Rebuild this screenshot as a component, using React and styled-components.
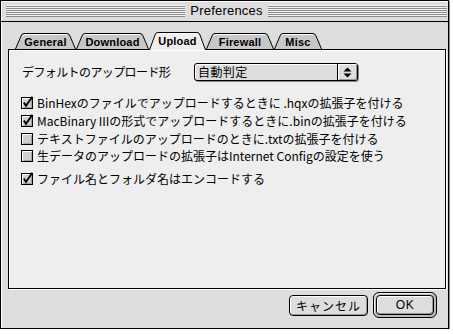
import React from 'react';
import styled, { createGlobalStyle } from 'styled-components';

const Global = createGlobalStyle`
  html, body { margin: 0; padding: 0; background: #ffffff; }
  body { font-family: "Noto Sans CJK JP", "Liberation Sans", sans-serif; color: #000; }
  * { box-sizing: border-box; }
`;

const Window = styled.div`
  width: 449px;
  height: 329px;
  border: 1px solid #000;
  background: #dddddd;
  display: flex;
  flex-direction: column;
  box-shadow: 1px 1px 0 #888;
`;

const TitleBar = styled.div`
  height: 21px;
  flex: none;
  display: flex;
  align-items: center;
  gap: 5px;
  padding: 0 1px 0 5px;
  border-bottom: 1px solid #000;
  background: #dddddd;
  box-shadow: inset 1px 1px 0 #fff;
`;

const Stripes = styled.div`
  flex: 1;
  height: 12px;
  background: repeating-linear-gradient(to bottom, #f4f4f4 0 1px, #8a8a8a 1px 2px);
`;

const Title = styled.div`
  font-family: "Liberation Sans", Arial, sans-serif;
  font-size: 13px;
  line-height: 14px;
  letter-spacing: 0.2px;
`;

const Body = styled.div`
  flex: 1;
  display: flex;
  flex-direction: column;
  padding: 10px 2px 0 7px;
  box-shadow: inset 1px 0 0 #fff;
`;

const TabRow = styled.div`
  display: flex;
  align-items: flex-end;
  height: 17px;
  padding-left: 7px;
  position: relative;
  z-index: 2;
`;

const TabShell = styled.div`
  position: relative;
  width: ${p => p.$w}px;
  height: ${p => (p.$active ? 18 : 16)}px;
  margin-bottom: ${p => (p.$active ? -1 : 0)}px;
  display: flex;
  align-items: center;
  justify-content: center;
  padding-top: 1px;
  font-family: "Liberation Sans", Arial, sans-serif;
  font-weight: bold;
  font-size: 11px;
  letter-spacing: 0.2px;
  color: #000;
`;

const TabShape = styled.svg`
  position: absolute;
  left: 0;
  top: 0;
  z-index: -1;
`;

const TabLabel = styled.span`
  position: relative;
  padding-bottom: ${p => (p.$active ? 2 : 0)}px;
`;

function Tab({ label, w, active }) {
  const h = active ? 18 : 16;
  const s = 6;
  const fill = active ? '#eeeeee' : '#c8c8c8';
  const d = `M0.5,${h} L${s},3 Q${s + 0.8},0.5 ${s + 3},0.5 L${w - s - 3},0.5 Q${w - s - 0.8},0.5 ${w - s},3 L${w - 0.5},${h}`;
  return (
    <TabShell $w={w} $active={active}>
      <TabShape width={w} height={h}>
        <path d={d + ' Z'} fill={fill} stroke="none" />
        <path d={d} fill="none" stroke="#000" strokeWidth="1" />
        <path d={`M${s + 1.5},3.5 L${s + 3},1.5 L${w - s - 3},1.5`} fill="none" stroke="#fff" strokeWidth="1" />
      </TabShape>
      <TabLabel $active={active}>{label}</TabLabel>
    </TabShell>
  );
}

const Panel = styled.div`
  width: 438px;
  height: 240px;
  border: 1px solid #000;
  background: #eeeeee;
  box-shadow: inset 1px 1px 0 #fff, 1px 1px 0 #fff;
  padding: 13px 12px 0 12px;
  display: flex;
  flex-direction: column;
  position: relative;
  z-index: 1;
`;

const PopupRow = styled.div`
  display: flex;
  align-items: center;
  height: 18px;
`;

const FieldLabel = styled.div`
  width: 173px;
  padding-left: 1px;
  font-size: 12px;
  line-height: 18px;
  letter-spacing: -0.6px;
  white-space: nowrap;
`;

const Popup = styled.div`
  width: 164px;
  height: 18px;
  border: 1px solid #000;
  border-radius: 3px;
  background: #dddddd;
  box-shadow: inset 1px 1px 0 #fff, 1px 1px 0 #888;
  display: flex;
  align-items: stretch;
`;

const PopupText = styled.div`
  flex: 1;
  padding-left: 3px;
  font-size: 12px;
  line-height: 16px;
  letter-spacing: 0.4px;
`;

const PopupArrows = styled.div`
  width: 20px;
  border-left: 1px solid #000;
  display: flex;
  align-items: center;
  justify-content: center;
  box-shadow: inset 1px 1px 0 #fff, inset -1px -1px 0 #999;
  border-radius: 0 2px 2px 0;
`;

const CheckList = styled.div`
  margin-top: 13px;
  display: flex;
  flex-direction: column;
`;

const CheckRow = styled.div`
  display: flex;
  align-items: center;
  gap: 3px;
  height: 17.7px;
  margin-top: ${p => p.$gap || 0}px;
  font-size: 12px;
  letter-spacing: 0;
  white-space: nowrap;
`;

const Box = styled.svg`
  flex: none;
  display: block;
`;

function CheckBox({ checked }) {
  return (
    <Box width="13" height="13" viewBox="0 0 13 13">
      <rect x="0.5" y="1.5" width="11" height="11" fill="#cfcfcf" stroke="#000" />
      <path d="M1.5,11.5 L1.5,2.5 L10.5,2.5" fill="none" stroke="#fff" />
      <path d="M2.5,11.5 L10.5,11.5 L10.5,3.5" fill="none" stroke="#a0a0a0" />
      {checked && (
        <polyline points="2.8,6.4 5,9.8 11.4,0.8" fill="none" stroke="#000" strokeWidth="1.9" strokeLinejoin="miter" />
      )}
    </Box>
  );
}

const ButtonRow = styled.div`
  display: flex;
  justify-content: flex-end;
  align-items: center;
  gap: 5px;
  margin-top: 3px;
  padding-right: 9px;
`;

const Button = styled.button`
  width: ${p => p.$w}px;
  height: ${p => p.$h}px;
  border: 1px solid #000;
  border-radius: 4px;
  background: #dddddd;
  box-shadow: inset 1px 1px 0 #fff, inset -1px -1px 0 #999;
  font-family: ${p => (p.$latin ? '"Liberation Sans", Arial, sans-serif' : '"Noto Sans CJK JP", sans-serif')};
  font-size: 12px;
  letter-spacing: ${p => (p.$latin ? '0.5px' : '1px')};
  color: #000;
  padding: 0;
  display: flex;
  align-items: center;
  justify-content: center;
`;

const DefaultRing = styled.div`
  border: 1px solid #000;
  border-radius: 6px;
  padding: 2px;
  background: #bbbbbb;
  box-shadow: inset 1px 1px 0 #eee;
`;

export default function App() {
  return (
    <>
      <Global />
      <Window>
        <TitleBar>
          <Stripes />
          <Title>Preferences</Title>
          <Stripes />
        </TitleBar>
        <Body>
          <TabRow>
            <Tab label="General" w={61} />
            <Tab label="Download" w={73} />
            <Tab label="Upload" w={57} active />
            <Tab label="Firewall" w={68} />
            <Tab label="Misc" w={48} />
          </TabRow>
          <Panel>
            <PopupRow>
              <FieldLabel>デフォルトのアップロード形</FieldLabel>
              <Popup>
                <PopupText>自動判定</PopupText>
                <PopupArrows>
                  <svg width="9" height="11" viewBox="0 0 9 11">
                    <path d="M4.5,0.5 L8.5,4.5 L0.5,4.5 Z" fill="#000" />
                    <path d="M0.5,6.5 L8.5,6.5 L4.5,10.5 Z" fill="#000" />
                  </svg>
                </PopupArrows>
              </Popup>
            </PopupRow>
            <CheckList>
              <CheckRow><CheckBox checked />BinHexのファイルでアップロードするときに .hqxの拡張子を付ける</CheckRow>
              <CheckRow><CheckBox checked />MacBinary IIIの形式でアップロードするときに.binの拡張子を付ける</CheckRow>
              <CheckRow><CheckBox />テキストファイルのアップロードのときに.txtの拡張子を付ける</CheckRow>
              <CheckRow><CheckBox />生データのアップロードの拡張子はInternet Configの設定を使う</CheckRow>
              <CheckRow $gap={5}><CheckBox checked />ファイル名とフォルダ名はエンコードする</CheckRow>
            </CheckList>
          </Panel>
          <ButtonRow>
            <Button $w={79} $h={21}>キャンセル</Button>
            <DefaultRing>
              <Button $w={58} $h={20} $latin>OK</Button>
            </DefaultRing>
          </ButtonRow>
        </Body>
      </Window>
    </>
  );
}
